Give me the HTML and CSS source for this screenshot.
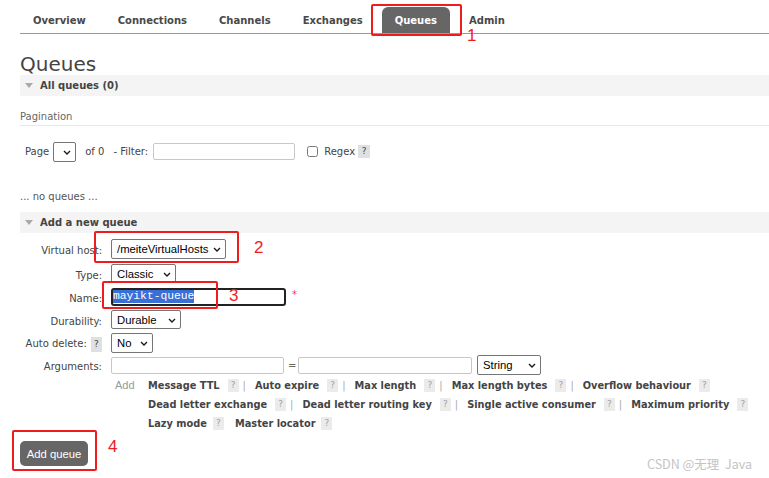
FILE: index.html
```html
<!DOCTYPE html>
<html lang="en">
<head>
<meta charset="utf-8">
<title>Queues</title>
<link rel="stylesheet" href="styles.css">
</head>
<body>
<div class="nav">
  <a class="tab">Overview</a>
  <a class="tab">Connections</a>
  <a class="tab">Channels</a>
  <a class="tab">Exchanges</a>
  <a class="tab active">Queues</a>
  <a class="tab">Admin</a>
</div>
<main class="main">
  <h1 class="title">Queues</h1>
  <h2 class="bar"><span class="tri"></span>All queues (0)</h2>
  <h3 class="sub">Pagination</h3>
  <div class="pager">
    <span class="p-page">Page</span>
    <span class="selbox sb-page"><select class="sel w-page"><option></option></select><svg class="chev" viewBox="0 0 8 5" width="8" height="5"><path d="M1 1 L4 4 L7 1"/></svg></span>
    <span class="p-of">of 0</span>
    <span class="p-filter">- Filter:</span>
    <input class="inp w-filter" type="text">
    <input class="chk" type="checkbox">
    <span class="p-regex">Regex</span>
    <span class="help dark h-regex">?</span>
  </div>
  <p class="none">... no queues ...</p>
  <h2 class="bar bar2"><span class="tri"></span>Add a new queue</h2>
  <div class="form">
    <span class="flabel">Virtual host:</span>
    <div class="fval"><span class="selbox"><select class="sel w-vhost"><option>/meiteVirtualHosts</option></select><svg class="chev" viewBox="0 0 8 5" width="8" height="5"><path d="M1 1 L4 4 L7 1"/></svg></span></div>
    <span class="flabel">Type:</span>
    <div class="fval"><span class="selbox"><select class="sel w-type"><option>Classic</option></select><svg class="chev" viewBox="0 0 8 5" width="8" height="5"><path d="M1 1 L4 4 L7 1"/></svg></span></div>
    <span class="flabel">Name:</span>
    <div class="fval"><span class="fake-input"><span class="picked">mayikt-queue</span></span><span class="req">*</span></div>
    <span class="flabel">Durability:</span>
    <div class="fval"><span class="selbox"><select class="sel w-dur"><option>Durable</option></select><svg class="chev" viewBox="0 0 8 5" width="8" height="5"><path d="M1 1 L4 4 L7 1"/></svg></span></div>
    <span class="flabel">Auto delete: <span class="help dark h-auto">?</span></span>
    <div class="fval"><span class="selbox"><select class="sel w-auto"><option>No</option></select><svg class="chev" viewBox="0 0 8 5" width="8" height="5"><path d="M1 1 L4 4 L7 1"/></svg></span></div>
    <span class="flabel">Arguments:</span>
    <div class="fval">
      <input class="inp w-arg" type="text">
      <span class="eq">=</span>
      <input class="inp w-arg2" type="text">
      <span class="selbox sb-str"><select class="sel w-str"><option>String</option></select><svg class="chev" viewBox="0 0 8 5" width="8" height="5"><path d="M1 1 L4 4 L7 1"/></svg></span>
    </div>
  </div>
  <div class="links">
    <span class="add">Add</span>
    <div class="lrows">
      <div class="lrow">
        <span class="arg">Message TTL</span><span class="help">?</span><span class="sep">|</span>
        <span class="arg">Auto expire</span><span class="help">?</span><span class="sep">|</span>
        <span class="arg">Max length</span><span class="help">?</span><span class="sep">|</span>
        <span class="arg">Max length bytes</span><span class="help">?</span><span class="sep">|</span>
        <span class="arg">Overflow behaviour</span><span class="help">?</span>
      </div>
      <div class="lrow">
        <span class="arg">Dead letter exchange</span><span class="help">?</span><span class="sep">|</span>
        <span class="arg">Dead letter routing key</span><span class="help">?</span><span class="sep">|</span>
        <span class="arg">Single active consumer</span><span class="help">?</span><span class="sep">|</span>
        <span class="arg">Maximum priority</span><span class="help">?</span>
      </div>
      <div class="lrow last">
        <span class="arg">Lazy mode</span><span class="help">?</span>
        <span class="arg gap">Master locator</span><span class="help">?</span>
      </div>
    </div>
  </div>
  <button class="btn" type="button">Add queue</button>
</main>

<div class="anno a1"></div><span class="num n1">1</span>
<div class="anno a2"></div><span class="num n2">2</span>
<div class="anno a3"></div><span class="num n3">3</span>
<div class="anno a4"></div><span class="num n4">4</span>
<div class="watermark">CSDN @无理&nbsp; Java</div>
</body>
</html>
```
FILE: styles.css
```css
* { box-sizing: border-box; }
html, body { margin: 0; padding: 0; background: #fff; }
body {
  font-family: "DejaVu Sans", Verdana, sans-serif;
  font-size: 10px;
  color: #484848;
  width: 769px;
  height: 478px;
  overflow: hidden;
  position: relative;
}

/* base form controls */
.selbox {
  position: relative;
  display: inline-flex;
  align-items: center;
}
.sel {
  -webkit-appearance: none;
  appearance: none;
  font-family: "Liberation Sans", Arial, sans-serif;
  font-size: 11.3px;
  color: #000;
  height: 19px;
  padding: 0 14px 0 5px;
  margin: 0;
  border: 1px solid #767676;
  border-radius: 2px;
  background: #fff;
}
.chev {
  position: absolute;
  right: 5px;
  top: 50%;
  margin-top: -2px;
  fill: none;
  stroke: #1a1a1a;
  stroke-width: 1.4;
}
.inp {
  height: 17px;
  margin: 0;
  padding: 0 2px;
  border: 1px solid #c8c8c8;
  border-radius: 2px;
  background: #fff;
}
.help {
  display: inline-block;
  width: 11px;
  height: 13px;
  line-height: 13px;
  text-align: center;
  background: #ebebeb;
  color: #a0a0a0;
  font-size: 9px;
  font-weight: normal;
}
.help.dark { background: #e0e0e0; color: #444; }

/* nav */
.nav {
  display: flex;
  margin-left: 20px;
  padding-top: 7px;
  height: 34px;
  border-bottom: 1px solid #999;
}
.tab {
  display: block;
  height: 26px;
  line-height: 25px;
  padding: 1px 13px 0;
  margin-right: 6px;
  font-weight: bold;
  font-size: 10px;
  color: #484848;
  border-radius: 6px 6px 0 0;
}
.tab.active { background: #666; color: #fff; }

/* main */
.main { padding-left: 20px; }
.title {
  margin: 20px 0 0;
  font-size: 20px;
  line-height: 21px;
  font-weight: normal;
  color: #444;
}
.bar {
  margin: 0;
  height: 21px;
  display: flex;
  align-items: center;
  background: #f4f4f4;
  font-size: 10px;
  font-weight: bold;
  color: #444;
}
.bar2 { margin-top: 9px; }
.tri {
  width: 0; height: 0;
  border-left: 4.5px solid transparent;
  border-right: 4.5px solid transparent;
  border-top: 5px solid #aaa;
  margin: 0 7px 0 5px;
}
.sub {
  margin: 15px 0 0;
  font-size: 10px;
  font-weight: normal;
  line-height: 12px;
  padding-bottom: 2px;
  color: #666;
  border-bottom: 1px solid #e8e8e8;
}

/* pager */
.pager {
  display: flex;
  align-items: center;
  height: 19px;
  margin-top: 16px;
  padding-left: 5px;
  color: #444;
}
.sb-page { margin-left: 4px; }
.w-page { width: 23px; height: 20px; padding: 0; }
.p-of { margin-left: 9px; }
.p-filter { margin-left: 9px; }
.w-filter { margin-left: 5px; width: 142px; }
.chk { margin: 0 0 0 12px; width: 11px; height: 11px; }
.p-regex { margin-left: 6px; }
.h-regex { margin-left: 3px; width: 12px; }

.none { margin: 30px 0 0; line-height: 12px; color: #555; }

/* form */
.form {
  display: grid;
  grid-template-columns: 82px auto;
  grid-template-rows: 24px 25px 21px 25px 22px 22px;
  column-gap: 9px;
  align-items: center;
  margin-top: 4px;
}
.flabel { text-align: right; color: #444; padding-top: 3px; }
.fval { display: flex; align-items: center; }
.w-vhost { width: 115px; height: 20px; }
.w-type { width: 65px; }
.w-dur { width: 70px; }
.w-auto { width: 42px; height: 20px; }
.w-arg { width: 173px; }
.eq { margin: 0 0 0 4px; width: 10px; color: #666; }
.w-arg2 { width: 174px; }
.sb-str { margin-left: 5px; }
.w-str { width: 64px; height: 20px; }
.h-auto { margin-left: 1px; height: 15px; line-height: 15px; }

.fake-input {
  display: flex;
  align-items: center;
  width: 175px;
  height: 18px;
  border: 2px solid #222;
  border-radius: 3px;
}
.picked {
  font-family: "Liberation Mono", "Courier New", monospace;
  font-size: 11.3px;
  line-height: 13px;
  background: #3b6fd8;
  color: #fff;
}
.req {
  align-self: flex-start;
  margin: 3px 0 0 6px;
  color: #f36;
  font-size: 10px;
  line-height: 8px;
}

/* links */
.links {
  display: flex;
  margin-left: 91px;
}
.add {
  width: 37px;
  padding-left: 4px;
  line-height: 19px;
  font-family: "Liberation Sans", Arial, sans-serif;
  font-size: 11px;
  color: #999;
}
.lrow {
  display: flex;
  align-items: center;
  height: 19px;
}
.arg { font-weight: bold; font-size: 9.8px; color: #444; }
.lrow .help { margin-left: 8px; }
.sep { margin: 0 9px 0 4px; color: #aaa; }
.lrow.last .help { margin-left: 6px; }
.arg.gap { margin-left: 11px; }

.btn {
  display: block;
  margin-top: 8px;
  width: 68px;
  height: 25px;
  padding: 0;
  border: none;
  border-radius: 5px;
  background: #666;
  color: #fff;
  font-family: "Liberation Sans", Arial, sans-serif;
  font-size: 11.3px;
}

/* annotations (overlays) */
.anno {
  position: absolute;
  border: 2px solid #ee1d1d;
  border-radius: 2px;
}
.a1 { left: 371px; top: 4px; width: 91px; height: 32px; }
.a2 { left: 94px; top: 231px; width: 145px; height: 32px; }
.a3 { left: 102px; top: 281px; width: 116px; height: 28px; }
.a4 { left: 12px; top: 430px; width: 85px; height: 41px; }
.num {
  position: absolute;
  font-family: "Liberation Sans", Arial, sans-serif;
  font-size: 17px;
  line-height: 17px;
  color: #ee1d1d;
}
.n1 { left: 467px; top: 27px; }
.n2 { left: 254px; top: 239px; }
.n3 { left: 229px; top: 287px; }
.n4 { left: 108px; top: 438px; }
.watermark {
  position: absolute;
  left: 647px;
  top: 456px;
  font-family: "Noto Sans CJK SC", "Liberation Sans", sans-serif;
  font-size: 12.5px;
  line-height: 16px;
  color: #c4c4c4;
}
```
